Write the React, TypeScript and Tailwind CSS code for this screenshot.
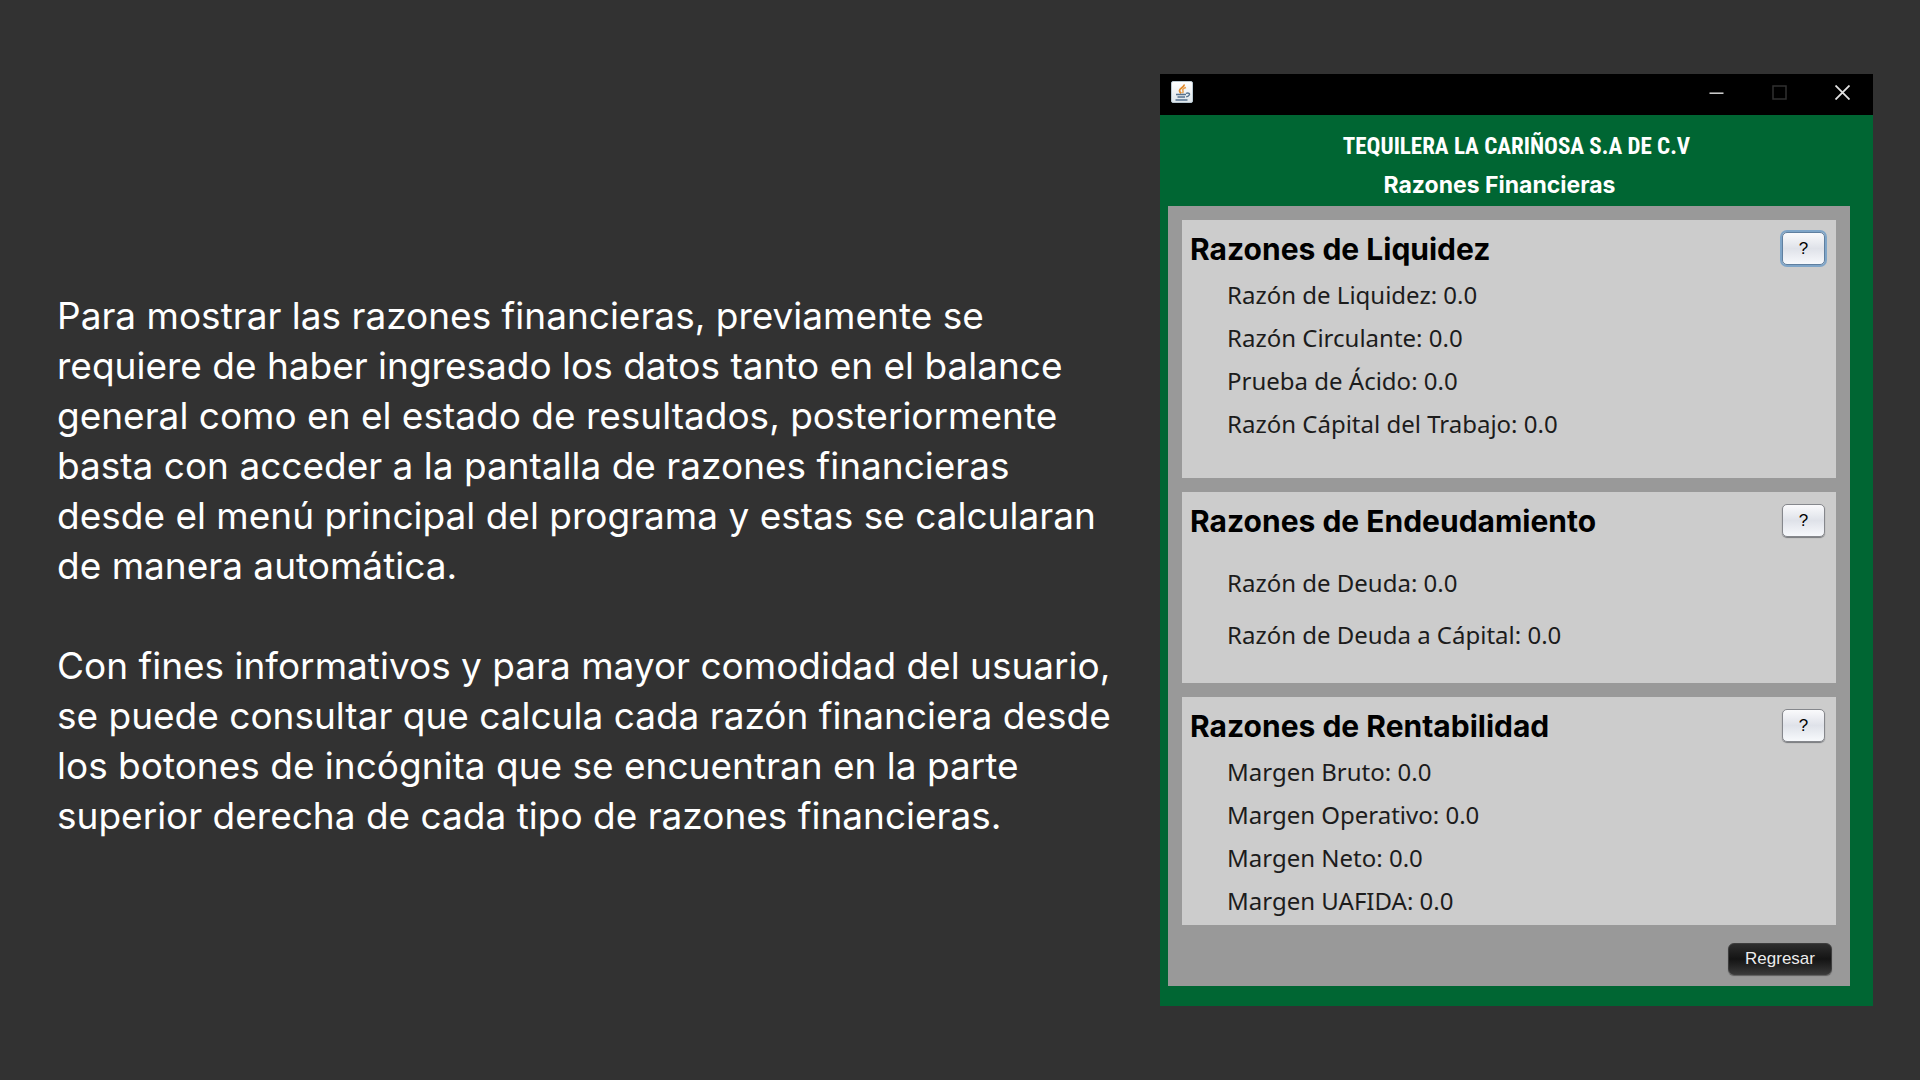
type Group = {
  title: string;
  items: string[];
  focused?: boolean;
  listClass: string;
  rowClass: string;
};

const groups: Group[] = [
  {
    title: 'Razones de Liquidez',
    items: [
      'Razón de Liquidez: 0.0',
      'Razón Circulante: 0.0',
      'Prueba de Ácido: 0.0',
      'Razón Cápital del Trabajo: 0.0',
    ],
    focused: true,
    listClass: 'mt-2 pb-[33px]',
    rowClass: 'leading-[43px]',
  },
  {
    title: 'Razones de Endeudamiento',
    items: ['Razón de Deuda: 0.0', 'Razón de Deuda a Cápital: 0.0'],
    listClass: 'mt-5 pb-[22px]',
    rowClass: 'leading-[52px]',
  },
  {
    title: 'Razones de Rentabilidad',
    items: [
      'Margen Bruto: 0.0',
      'Margen Operativo: 0.0',
      'Margen Neto: 0.0',
      'Margen UAFIDA: 0.0',
    ],
    listClass: 'mt-2 pb-[3px]',
    rowClass: 'leading-[43px]',
  },
];

function JavaIcon() {
  return (
    <svg width="22" height="22" viewBox="0 0 22 22" fill="none" aria-hidden="true">
      <defs>
        <linearGradient id="tile" x1="0" y1="0" x2="0" y2="1">
          <stop offset="0" stopColor="#ffffff" />
          <stop offset="1" stopColor="#dde5ea" />
        </linearGradient>
      </defs>
      <rect x="0.5" y="0.5" width="21" height="21" rx="1.5" fill="url(#tile)" stroke="#b9c8d1" />
      <path d="M13 3.500c.8 2.700-4.700 3.500-4.500 6.200 0 1.100.9 1.800 1.700 2.600" stroke="#e08a2c" strokeWidth="1.800" />
      <path d="M15 6.500c-2 .6-3.700 1.500-3.200 2.800.4 1 .8 1.500-.3 2.900" stroke="#e9a04e" strokeWidth="1.500" />
      <path d="M5 13.500h10M6.500 16h7.500M4.500 19h12" stroke="#56728e" strokeWidth="1.500" />
      <path d="M15 12.300c2.700-.8 4.200.2 3.200 1.700-.5.900-1.700 1.600-3 1.800" stroke="#56728e" strokeWidth="1.400" />
    </svg>
  );
}

function TitleBar() {
  return (
    <div className="flex h-[41px] items-center justify-between bg-black pr-[23px] pb-[5px] pl-[11px]">
      <JavaIcon />
      <div className="flex items-center gap-12">
        <button type="button" aria-label="Minimizar">
          <svg className="block" width="15" height="15" viewBox="0 0 15 15" stroke="#d4d4d4" strokeWidth="1.500">
            <path d="M0.500 8.200h14" />
          </svg>
        </button>
        <button type="button" aria-label="Maximizar" disabled>
          <svg className="block" width="15" height="15" viewBox="0 0 15 15" fill="none" stroke="#303030" strokeWidth="1.500">
            <rect x="1" y="1" width="13" height="13" />
          </svg>
        </button>
        <button type="button" aria-label="Cerrar">
          <svg className="block" width="15" height="15" viewBox="0 0 15 15" stroke="#e2e2e2" strokeWidth="1.800">
            <path d="M0.500 0.500l14 14M14.500 0.500l-14 14" />
          </svg>
        </button>
      </div>
    </div>
  );
}

function RatioCard({ group }: { group: Group }) {
  return (
    <section className="bg-[#cccccc] pt-3">
      <div className="flex h-[33px] items-center justify-between pr-[11px] pl-2">
        <h3 className="font-[Inter,sans-serif] text-[30px] leading-8 font-bold text-black">{group.title}</h3>
        <button
          type="button"
          aria-label={`Ayuda: ${group.title}`}
          className={
            group.focused
              ? "h-[33px] w-[43px] rounded-[5px] border border-[#5f7f9f] bg-linear-to-b from-[#fafafc] via-[#dfe2e9] to-[#f7f9fc] font-['Liberation_Sans',sans-serif] text-[17px] text-black shadow-[0_0_0_2px_#7fa5c8]"
              : "h-[33px] w-[43px] rounded-[5px] border border-[#85878c] bg-linear-to-b from-[#fafafc] via-[#dfe2e9] to-[#f7f9fc] font-['Liberation_Sans',sans-serif] text-[17px] text-black shadow-[0_1px_1px_#77797d]"
          }
        >
          ?
        </button>
      </div>
      <ul className={`pl-[45px] font-['Noto_Sans',sans-serif] text-2xl text-[#1c1c1c] ${group.listClass}`}>
        {group.items.map((item) => (
          <li key={item} className={group.rowClass}>
            {item}
          </li>
        ))}
      </ul>
    </section>
  );
}

function AppWindow() {
  return (
    <section className="bg-[#006633]" aria-label="Razones Financieras">
      <TitleBar />
      <header className="pt-[13px] pb-[2px] text-center font-bold text-white">
        <h1 className="font-['Roboto_Condensed',sans-serif] text-[23px] leading-[38px]">
          TEQUILERA LA CARIÑOSA S.A DE C.V
        </h1>
        <h2 className="pr-[34px] font-[Inter,sans-serif] text-[23px] leading-[38px]">Razones Financieras</h2>
      </header>
      <div className="mr-[23px] ml-2 flex flex-col gap-[14px] bg-[#999999] px-[14px] pt-[14px] pb-[11px]">
        {groups.map((group) => (
          <RatioCard key={group.title} group={group} />
        ))}
        <div className="flex justify-end pt-1 pr-1">
          <button
            type="button"
            className="h-8 w-[104px] rounded-[6px] border border-[#3d3d3d] bg-linear-to-b from-[#2e2e2e] via-[#141414] to-[#383838] font-['Liberation_Sans',sans-serif] text-[17px] text-[#ececec] shadow-[0_1px_1px_#5c5c5c]"
          >
            Regresar
          </button>
        </div>
      </div>
      <div className="h-5" />
    </section>
  );
}

export default function App() {
  return (
    <main className="grid min-h-screen grid-cols-[1060fr_713fr] items-center gap-[43px] bg-[#323232] pr-[47px] pl-[57px]">
      <article className="mt-[52px] flex min-w-0 flex-col gap-[50px] font-[Inter,sans-serif] text-[37px] leading-[50px] whitespace-nowrap text-white">
        <p>
          Para mostrar las razones financieras, previamente se
          <br />
          requiere de haber ingresado los datos tanto en el balance
          <br />
          general como en el estado de resultados, posteriormente
          <br />
          basta con acceder a la pantalla de razones financieras
          <br />
          desde el menú principal del programa y estas se calcularan
          <br />
          de manera automática.
        </p>
        <p>
          Con fines informativos y para mayor comodidad del usuario,
          <br />
          se puede consultar que calcula cada razón financiera desde
          <br />
          los botones de incógnita que se encuentran en la parte
          <br />
          superior derecha de cada tipo de razones financieras.
        </p>
      </article>
      <AppWindow />
    </main>
  );
}
